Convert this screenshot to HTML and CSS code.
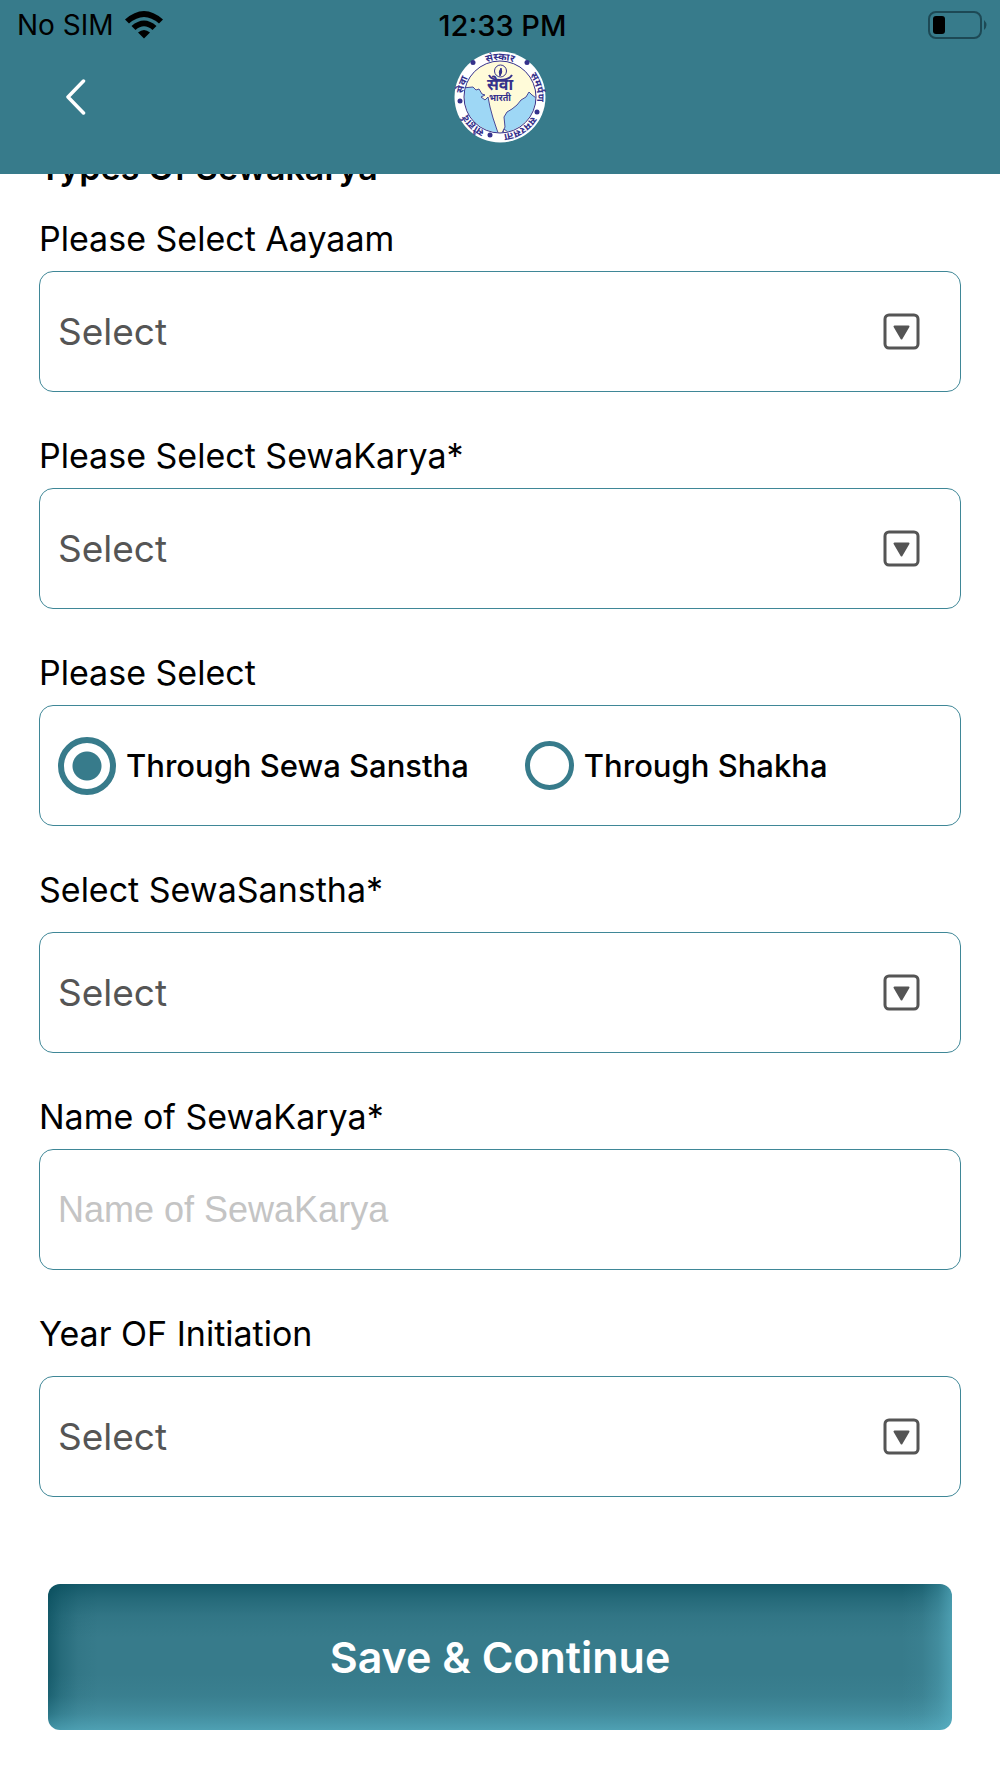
FILE: index.html
```html
<!DOCTYPE html>
<html lang="en">
<head>
    <meta charset="UTF-8">
    <meta name="viewport" content="width=device-width, initial-scale=1.0">
    <title>Sewa Bharti</title>
    <link rel="stylesheet" href="styles.css">
</head>
<body>
    <header class="header">
        <div class="status-bar">
            <div class="carrier">
                <span>No SIM</span>
                <svg class="wifi" viewBox="0 0 38 28" aria-hidden="true">
                    <path d="M0 8.500Q19-8.500 38 8.500L34 12.500Q19-.5 4 12.500Z"/>
                    <path d="M6.500 15Q19 4 31.500 15L27.500 19Q19 11.500 10.500 19Z"/>
                    <path d="M13 21.500Q19 16.500 25 21.500L19 27.500Z"/>
                </svg>
            </div>
            <span class="time">12:33 PM</span>
            <svg class="battery" viewBox="0 0 60 28" aria-hidden="true">
                <rect x="1" y="1" width="52" height="26" rx="7" fill="none" stroke="#1d4955" stroke-width="2"/>
                <rect x="5" y="5" width="12" height="18" rx="3"/>
                <path d="M56 9Q61 14 56 19Z" fill="#1d4955"/>
            </svg>
        </div>
        <div class="nav-bar">
            <button type="button" class="back" aria-label="Back">
                <svg viewBox="0 0 22 36" aria-hidden="true">
                    <path d="M18.500 2L3 18L18.500 34" fill="none" stroke="#fff" stroke-width="3.500" stroke-linecap="round" stroke-linejoin="round"/>
                </svg>
            </button>
            <svg class="logo" viewBox="0 0 92 92" role="img" aria-label="Sewa Bharti">
                <defs>
                    <clipPath id="disc"><circle cx="46" cy="46" r="35.500"/></clipPath>
                    <path id="ring" d="M46 83A37 37 0 1 1 46.100 83"/>
                </defs>
                <circle cx="46" cy="46" r="45.500" fill="#fff"/>
                <circle cx="46" cy="46" r="36" fill="#fffbd9"/>
                <g clip-path="url(#disc)" fill="#9ed7f5" stroke="#4a4a96" stroke-width="1">
                    <path d="M8 37L19 36L22 39L25 38L28 43L31 44L27 46L31 49L34 46L36 56L39 67L43 79L45 84L30 92H0Z"/>
                    <path d="M48 82L51 76L50 66L53 61L58 58L63 54L67 49L72 46L75 41L78 44L85 49L92 48V92H50Z"/>
                    <path d="M50 78L54 81L52 83L49 82Z" fill="#fffbd9"/>
                </g>
                <circle cx="46" cy="46" r="36" fill="none" stroke="#35318c" stroke-width="1"/>
                <g fill="none" stroke="#35318c">
                    <circle cx="46.500" cy="20" r="6" stroke-width="1"/>
                    <path d="M35 24Q37 29 46 29T58 24" stroke-width="2"/>
                    <path d="M46 25Q44 21 47 17Q49 21 46 25Z" fill="#35318c"/>
                </g>
                <text class="logo-name" x="46" y="39" font-size="16">सेवा</text>
                <text class="logo-name" x="46" y="50" font-size="9">भारती</text>
                <g class="logo-ring" font-size="10">
                    <text><textPath href="#ring" startOffset="50%">संस्कार</textPath></text>
                    <text><textPath href="#ring" startOffset="30%">सेवा</textPath></text>
                    <text><textPath href="#ring" startOffset="71%">समर्पण</textPath></text>
                    <text><textPath href="#ring" startOffset="12%">सौहार्द</textPath></text>
                    <text><textPath href="#ring" startOffset="91%">समरसता</textPath></text>
                </g>
                <g fill="#35318c">
                    <circle cx="19" cy="11.500" r="2.500"/>
                    <circle cx="73" cy="11.500" r="2.500"/>
                    <circle cx="6" cy="50" r="2.500"/>
                    <circle cx="83" cy="61" r="2.500"/>
                    <circle cx="36" cy="84" r="2.500"/>
                </g>
            </svg>
        </div>
    </header>

    <form class="form">
        <h1>Types Of Sewakarya</h1>

        <div class="field">
            <label for="aayaam">Please Select Aayaam</label>
            <div class="select">
                <select id="aayaam"><option>Select</option></select>
                <svg class="arrow" viewBox="0 0 37 37" aria-hidden="true"><use href="#arrow"/></svg>
            </div>
        </div>

        <div class="field">
            <label for="sewakarya">Please Select SewaKarya*</label>
            <div class="select">
                <select id="sewakarya"><option>Select</option></select>
                <svg class="arrow" viewBox="0 0 37 37" aria-hidden="true"><use href="#arrow"/></svg>
            </div>
        </div>

        <fieldset class="field">
            <legend>Please Select</legend>
            <div class="options">
                <label><input type="radio" name="through" value="sanstha" checked>Through Sewa Sanstha</label>
                <label><input type="radio" name="through" value="shakha">Through Shakha</label>
            </div>
        </fieldset>

        <div class="field spaced">
            <label for="sanstha">Select SewaSanstha*</label>
            <div class="select">
                <select id="sanstha"><option>Select</option></select>
                <svg class="arrow" viewBox="0 0 37 37" aria-hidden="true"><use href="#arrow"/></svg>
            </div>
        </div>

        <div class="field">
            <label for="name">Name of SewaKarya*</label>
            <input type="text" id="name" placeholder="Name of SewaKarya">
        </div>

        <div class="field spaced">
            <label for="year">Year OF Initiation</label>
            <div class="select">
                <select id="year"><option>Select</option></select>
                <svg class="arrow" viewBox="0 0 37 37" aria-hidden="true"><use href="#arrow"/></svg>
            </div>
        </div>

        <button type="submit" class="save">Save &amp; Continue</button>
    </form>

    <svg width="0" height="0" class="symbols" aria-hidden="true">
        <symbol id="arrow" viewBox="0 0 37 37">
            <rect x="2" y="2" width="33" height="33" rx="4" fill="none" stroke="#555" stroke-width="3"/>
            <path d="M11.500 13.500H25.500L18.500 25.500Z" fill="#555" stroke="#555" stroke-width="2" stroke-linejoin="round"/>
        </symbol>
    </svg>
</body>
</html>
```
FILE: styles.css
```css
* {
    box-sizing: border-box;
}
body {
    margin: 0;
    font-family: Inter, "Noto Sans", sans-serif;
    color: #000;
    background-color: #fff;
}
.header {
    position: sticky;
    top: 0;
    z-index: 1;
    height: 174px;
    background-color: #377b8b;
}
.status-bar {
    display: grid;
    grid-template-columns: 1fr auto 1fr;
    align-items: center;
    height: 50px;
    padding: 0 12px 0 17px;
    font-size: 28px;
}
.carrier {
    display: flex;
    align-items: center;
    gap: 11px;
}
.wifi {
    width: 38px;
    height: 28px;
}
.time {
    font-size: 29px;
    font-weight: 500;
}
.battery {
    justify-self: end;
    width: 60px;
    height: 28px;
}
.nav-bar {
    display: grid;
    grid-template-columns: 1fr auto 1fr;
    align-items: center;
    height: 94px;
    padding: 0 39px;
}
.back {
    justify-self: start;
    display: flex;
    padding: 10px 26px;
    border: none;
    background: none;
    cursor: pointer;
}
.back svg {
    width: 22px;
    height: 36px;
}
.logo {
    width: 92px;
    height: 92px;
}
.logo-name,
.logo-ring {
    fill: #35318c;
    font-weight: bold;
    text-anchor: middle;
}
.form {
    display: flex;
    flex-direction: column;
    gap: 44px;
    /* the form is scrolled up, its title half under the header */
    margin-top: -28px;
    padding: 0 39px 48px;
}
h1 {
    margin: 0 0 -15px;
    font-size: 34px;
    line-height: 44px;
    font-weight: 600;
}
.field {
    display: flex;
    flex-direction: column;
    gap: 12px;
    min-width: 0;
    margin: 0;
    padding: 0;
    border: none;
    font-size: 34px;
    line-height: 40px;
}
.spaced {
    gap: 22px;
}
legend {
    padding: 0;
    margin-bottom: 12px;
}
.select {
    display: grid;
    align-items: center;
}
.select select,
.select .arrow {
    grid-area: 1 / 1;
}
.select .arrow {
    justify-self: end;
    width: 37px;
    height: 37px;
    margin-right: 41px;
    pointer-events: none;
}
select,
input[type="text"],
.options {
    width: 100%;
    height: 121px;
    padding: 0 18px;
    border: 1px solid #3f8797;
    border-radius: 14px;
    background-color: #fff;
}
select {
    appearance: none;
    font-family: inherit;
    font-size: 37px;
    color: #555;
}
input[type="text"] {
    font-family: "Liberation Sans", Arial, sans-serif;
    font-size: 36px;
}
input::placeholder {
    color: #c4c4c4;
}
.options {
    display: flex;
    align-items: center;
    gap: 56px;
}
.options label {
    display: flex;
    align-items: center;
    gap: 10px;
    font-size: 31px;
    font-weight: 500;
}
input[type="radio"] {
    appearance: none;
    flex: none;
    width: 49px;
    height: 49px;
    margin: 0;
    border: 5px solid #377b8b;
    border-radius: 50%;
}
input[type="radio"]:checked {
    width: 58px;
    height: 58px;
    border-width: 6px;
    background: radial-gradient(circle, #377b8b 14px, #fff 15px);
}
.save {
    height: 146px;
    margin: 43px 9px 0;
    border: none;
    border-radius: 12px;
    font-family: inherit;
    font-size: 43px;
    font-weight: 600;
    color: #fff;
    background:
        linear-gradient(to left, rgba(91, 180, 200, 0.65), rgba(91, 180, 200, 0.3) 14px, rgba(91, 180, 200, 0.08) 30px, rgba(91, 180, 200, 0) 50px),
        linear-gradient(to top, rgba(91, 180, 200, 0.65), rgba(91, 180, 200, 0.3) 16px, rgba(91, 180, 200, 0.08) 34px, rgba(91, 180, 200, 0) 56px),
        linear-gradient(to bottom, rgba(0, 70, 85, 0.6), rgba(0, 70, 85, 0.32) 15px, rgba(0, 70, 85, 0.1) 32px, rgba(0, 70, 85, 0) 54px),
        linear-gradient(to right, rgba(0, 70, 85, 0.6), rgba(0, 70, 85, 0.3) 13px, rgba(0, 70, 85, 0.08) 30px, rgba(0, 70, 85, 0) 50px),
        #377b8b;
    cursor: pointer;
}
.symbols {
    position: absolute;
}
```
